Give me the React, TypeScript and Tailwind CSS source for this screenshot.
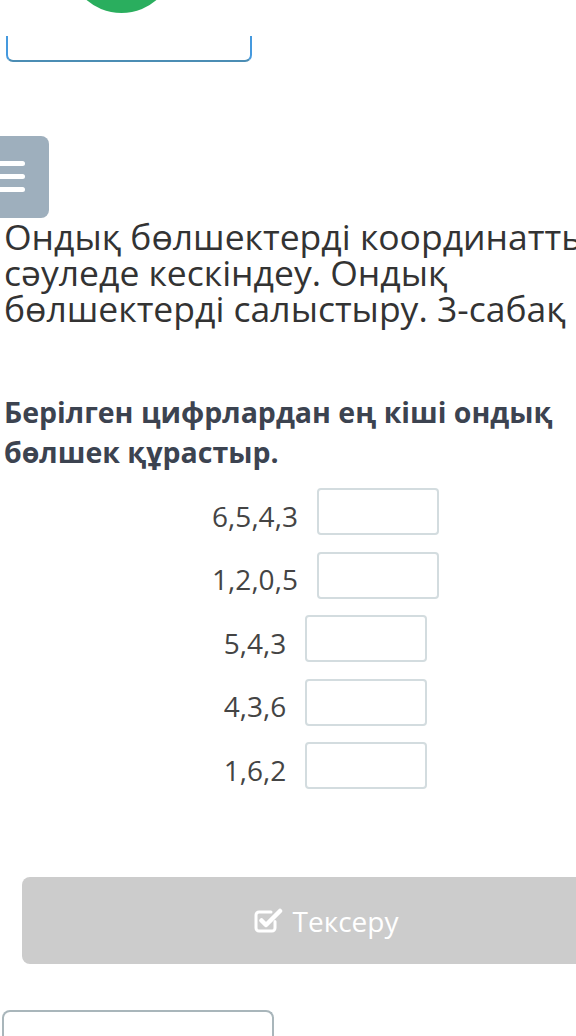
import React from 'react';

const rows = ['6,5,4,3', '1,2,0,5', '5,4,3', '4,3,6', '1,6,2'];

function CheckSquare() {
  return (
    <svg width="29" height="26" viewBox="0 0 29 26" fill="none" className="mr-[10px]">
      <path d="M21 13.5V20a3 3 0 0 1-3 3H5a3 3 0 0 1-3-3V7a3 3 0 0 1 3-3h12" stroke="white" strokeWidth="3" strokeLinecap="round" />
      <path d="M7.5 12.5l4.5 4.5L26 3" stroke="white" strokeWidth="4.5" strokeLinecap="round" strokeLinejoin="round" />
    </svg>
  );
}

export default function App() {
  return (
    <div className="relative w-[576px] h-[1036px] overflow-hidden bg-white" style={{ fontFamily: '"Open Sans", sans-serif' }}>
      {/* top card remains */}
      <div className="ml-[68px] -mt-[94px] w-[107px] h-[107px] rounded-full bg-[#2aae5e]" />
      <div className="ml-[6px] mt-[23px] w-[246px] h-[26px] rounded-b-[7px] border-2 border-t-0 border-x-[#4599de] border-b-[#4b8db4]" />

      {/* menu button */}
      <div className="mt-[74px] w-[49px] h-[82px] rounded-r-[8px] bg-[#9eafbd] flex flex-col justify-center gap-[8px] pb-[2px]">
        <div className="w-[25px] h-[5px] rounded-r-full bg-white" />
        <div className="w-[25px] h-[5px] rounded-r-full bg-white" />
        <div className="w-[25px] h-[5px] rounded-r-full bg-white" />
      </div>

      <h1 className="pl-[4px] w-[700px] whitespace-nowrap text-[35.5px] leading-[36px] text-[#333] font-normal">
        Ондық бөлшектерді координатты
        <br />
        сәуледе кескіндеу. Ондық
        <br />
        бөлшектерді салыстыру. 3-сабақ
      </h1>

      <p className="mt-[66px] pl-[4px] whitespace-nowrap text-[28.5px] leading-[40px] font-bold text-[#3c4350]">
        Берілген цифрлардан ең кіші ондық
        <br />
        бөлшек құрастыр.
      </p>

      <div className="mt-[16px] pl-[75px] flex flex-col items-center gap-[16.5px]">
        {rows.map((r) => (
          <div key={r} className="flex items-center gap-[19px]">
            <span className="text-[28px] leading-[36px] text-[#444] mt-[8px]">{r}</span>
            <div className="w-[122px] h-[47px] rounded-[4px] border-2 border-[#d3dcdf] bg-white" />
          </div>
        ))}
      </div>

      <div className="mt-[88px] ml-[22px] w-[608px] h-[87px] rounded-[8px] bg-[#cccccc] flex items-center justify-center text-white text-[28px]">
        <CheckSquare />
        <span>Тексеру</span>
      </div>

      <div className="mt-[46px] ml-[2px] w-[272px] h-[40px] rounded-t-[8px] border-2 border-b-0 border-[#a9b6bb]" />
    </div>
  );
}
